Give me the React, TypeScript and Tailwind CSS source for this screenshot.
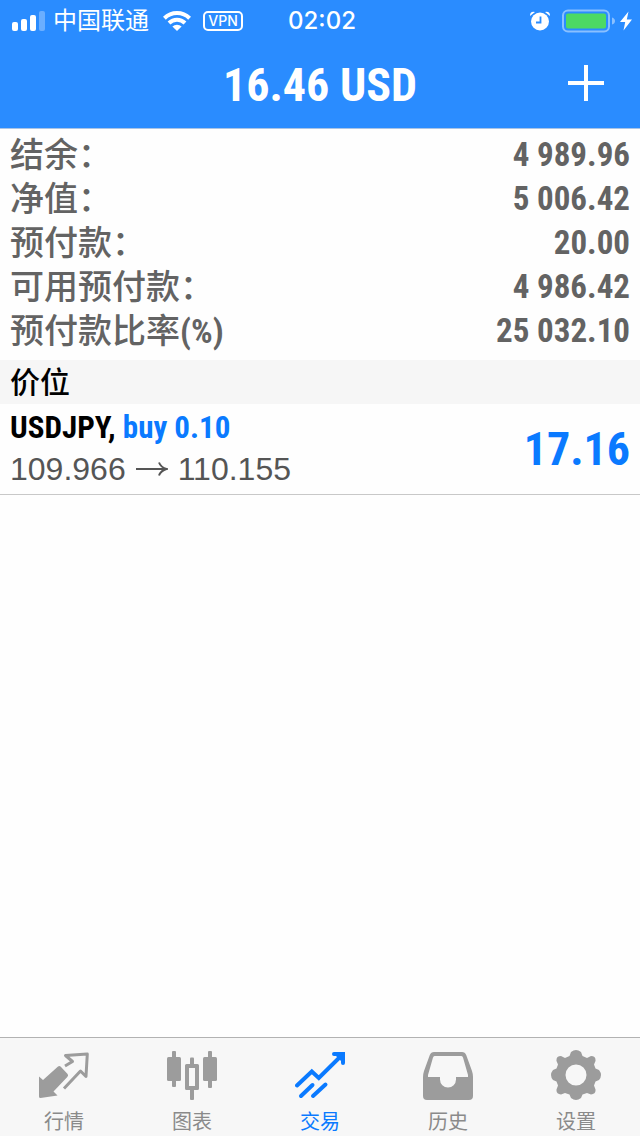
import type { ReactNode } from 'react'
import clsx from 'clsx'

const summary = [
  { label: '结余：', value: '4 989.96' },
  { label: '净值：', value: '5 006.42' },
  { label: '预付款：', value: '20.00' },
  { label: '可用预付款：', value: '4 986.42' },
  { label: '预付款比率', unit: '(%)', value: '25 032.10' },
]

const positions = [
  { symbol: 'USDJPY', side: 'buy 0.10', open: '109.966', current: '110.155', profit: '17.16' },
]

const tabs: { label: string; icon: ReactNode; active?: boolean }[] = [
  { label: '行情', icon: <QuotesIcon /> },
  { label: '图表', icon: <ChartIcon /> },
  { label: '交易', icon: <TradeIcon />, active: true },
  { label: '历史', icon: <HistoryIcon /> },
  { label: '设置', icon: <SettingsIcon /> },
]

const condensed = "font-['Roboto_Condensed','Liberation_Sans',sans-serif] font-bold"

function TabSvg({ children }: { children: ReactNode }) {
  return (
    <svg viewBox="0 0 50 50" className="size-[50px]" fill="currentColor" aria-hidden="true">
      {children}
    </svg>
  )
}

function QuotesIcon() {
  return (
    <TabSvg>
      <path d="M0 26.5 L4 30 L19 16.5 Q20.5 15.5 21.8 16.8 L28.6 24 Q29.8 25.5 28.3 27 L14.5 41.5 L18.5 45.5 L1.5 48 Q0 48 0 46.5 Z" />
      <path
        d="M26 16 L33.5 11.5 L26.5 5.5 L48.3 4 L47 26.5 L41.5 21 L25 38.5"
        fill="none"
        stroke="currentColor"
        strokeWidth="3"
        strokeLinejoin="round"
      />
    </TabSvg>
  )
}

function ChartIcon() {
  return (
    <TabSvg>
      <rect x="5" y="1" width="4" height="36" rx="1" />
      <rect x="0" y="7" width="14" height="24" rx="1.5" />
      <rect x="23" y="7.5" width="4" height="8" rx="1" />
      <rect x="23" y="38" width="4" height="12" rx="1" />
      <path
        d="M19.5 14 h11 a1.5 1.5 0 0 1 1.5 1.5 v23 a1.5 1.5 0 0 1 -1.5 1.5 h-11 a1.5 1.5 0 0 1 -1.5 -1.5 v-23 a1.5 1.5 0 0 1 1.5 -1.5 Z M22 18 v18 h6 v-18 Z"
        fillRule="evenodd"
      />
      <rect x="41" y="1" width="4" height="37" rx="1" />
      <rect x="36" y="7" width="14" height="24" rx="1.5" />
    </TabSvg>
  )
}

function TradeIcon() {
  return (
    <TabSvg>
      <g fill="none" stroke="currentColor" strokeWidth="4" strokeLinecap="round" strokeLinejoin="miter">
        <path d="M2 35.5 L16.8 21.5 L23.8 28 L47 5" />
        <path d="M39 4 H48 V13" />
        <path d="M6 46 L17.5 35 M18 46 L30.5 34.5" />
      </g>
      <path d="M39 4 H48 V13 Z" />
    </TabSvg>
  )
}

function HistoryIcon() {
  return (
    <TabSvg>
      <path
        d="M11 2 H39 Q42 2 43.2 5 L49 21 Q50 24 50 27 V46 Q50 50 46 50 H4 Q0 50 0 46 V27 Q0 24 1 21 L6.8 5 Q8 2 11 2 Z M11.5 6 Q10.5 6 10 7.5 L5 25 V27 H17 V29.5 A8 8 0 0 0 33 29.5 V27 H45 V25 L40 7.5 Q39.5 6 38.5 6 Z"
        fillRule="evenodd"
      />
    </TabSvg>
  )
}

function SettingsIcon() {
  return (
    <TabSvg>
      <path
        d="M20 2 Q25 -2 30 2 L31.5 6 L36 8 L40 6 Q45 6 44.5 11 L43 14.5 L44.5 18.5 L48 20 Q52 25 48 30 L44.5 31.5 L43 35.5 L44.5 39.5 Q45 44.5 40 44.5 L36 43 L31.5 44.5 L30 48 Q25 52 20 48 L18.5 44.5 L14 43 L10 44.5 Q5 44.5 5.5 39.5 L7 35.5 L5.5 31.5 L2 30 Q-2 25 2 20 L5.5 18.5 L7 14.5 L5.5 11 Q5 6 10 6 L14 8 L18.5 6 Z M25 14.5 A10.5 10.5 0 1 0 25 35.5 A10.5 10.5 0 1 0 25 14.5 Z"
        fillRule="evenodd"
      />
    </TabSvg>
  )
}

function StatusBar() {
  return (
    <div className="grid h-[42px] grid-cols-[1fr_auto_1fr] items-center pl-3 pr-2">
      <div className="flex items-center">
        <svg viewBox="0 0 33 20" className="h-5 w-[33px]" fill="currentColor" aria-hidden="true">
          <rect x="0" y="11" width="6" height="9" rx="2" />
          <rect x="9" y="8" width="6" height="12" rx="2" />
          <rect x="18" y="4" width="6" height="16" rx="2" />
          <rect x="27" y="0" width="6" height="20" rx="2" opacity="0.3" />
        </svg>
        <span className="ml-2 text-[24px] leading-10">中国联通</span>
        <svg viewBox="0 0 28 20" className="ml-3.5 h-5 w-7" aria-hidden="true">
          <g fill="none" stroke="currentColor" strokeWidth="4">
            <path d="M1.4 7.2 A18 18 0 0 1 26.6 7.2" />
            <path d="M6 12 A11.5 11.5 0 0 1 22 12" />
          </g>
          <path d="M14 20 L9.4 15.6 A6.6 6.6 0 0 1 18.6 15.6 Z" fill="currentColor" />
        </svg>
        <span className="ml-3 flex h-5 w-10 items-center justify-center rounded-[5px] border-2 border-white font-['Inter','Liberation_Sans',sans-serif] text-[14px] font-medium leading-4">
          VPN
        </span>
      </div>
      <time className="font-['Inter','Liberation_Sans',sans-serif] text-[24px] font-medium leading-10">02:02</time>
      <div className="flex items-center justify-end">
        <svg viewBox="0 0 20 20" className="size-5" aria-hidden="true">
          <circle cx="10" cy="10.5" r="9" fill="currentColor" />
          <path d="M0 5 Q0 0 5 1 Z M20 5 Q20 0 15 1 Z" fill="currentColor" />
          <path d="M10.5 5.5 V11.5 H6" fill="none" stroke="#2a8cff" strokeWidth="1.8" />
        </svg>
        <svg viewBox="0 0 54 24" className="ml-3 h-6 w-[54px]" aria-hidden="true">
          <rect x="1" y="1.5" width="46" height="21" rx="5" fill="none" stroke="white" strokeOpacity="0.45" strokeWidth="2" />
          <rect x="4" y="4.5" width="40" height="15" rx="2" fill="#4cd964" />
          <path d="M50 8.5 Q53 9.5 53 12 Q53 14.5 50 15.5 Z" fill="white" fillOpacity="0.45" />
        </svg>
        <svg viewBox="0 0 12 20" className="ml-1 h-5 w-3" fill="currentColor" aria-hidden="true">
          <path d="M8.5 0.5 L0 11 H5.2 L3.5 19.5 L12 8.5 H6.8 Z" />
        </svg>
      </div>
    </div>
  )
}

export default function App() {
  return (
    <div className="flex min-h-screen flex-col bg-[#fefefe] font-['Liberation_Sans','Noto_Sans_CJK_SC',sans-serif]">
      <header className="border-b border-[#a9c4e6] bg-[#2a8cff] text-white">
        <StatusBar />
        <div className="grid grid-cols-[1fr_auto_1fr] items-center px-9">
          <h1 className={clsx(condensed, 'col-start-2 text-[46px] leading-[86px]')}>16.46 USD</h1>
          <button type="button" aria-label="新订单" className="justify-self-end pb-1">
            <svg viewBox="0 0 36 36" className="size-9" stroke="currentColor" strokeWidth="4" aria-hidden="true">
              <path d="M18 0 V36 M0 18 H36" />
            </svg>
          </button>
        </div>
      </header>

      <main className="grow">
        <dl className="px-2.5 pb-[7px] pt-1 text-[#636363]">
          {summary.map((row) => (
            <div key={row.label} className="flex h-11 justify-between leading-[44px]">
              <dt className="text-[34px] font-medium">
                {row.label}
                {row.unit && <span className={condensed}>{row.unit}</span>}
              </dt>
              <dd className={clsx(condensed, 'text-[33px]')}>{row.value}</dd>
            </div>
          ))}
        </dl>

        <h2 className="h-11 bg-[#f6f6f6] px-2.5 text-[30px] font-medium leading-[46px] text-black">价位</h2>
        <ul>
          {positions.map((p) => (
            <li key={p.symbol} className="flex items-center justify-between border-b border-[#c8c8c8] px-2.5 pb-1 pt-1">
              <div>
                <p className={clsx(condensed, 'text-[31px] leading-10 text-black')}>
                  {p.symbol}, <span className="text-[#0a7aff]">{p.side}</span>
                </p>
                <p className="flex items-center gap-2.5 text-[32px] leading-[42px] text-[#555]">
                  {p.open}
                  <svg
                    viewBox="0 0 32 16"
                    className="h-4 w-8"
                    fill="none"
                    stroke="currentColor"
                    strokeWidth="2"
                    role="img"
                    aria-label="至"
                  >
                    <path d="M0 8 H30 M23 1.5 Q25 6.5 30.5 8 Q25 9.5 23 14.5" />
                  </svg>
                  {p.current}
                </p>
              </div>
              <p className={clsx(condensed, 'text-[46px] leading-[82px] text-[#0a7aff]')}>{p.profit}</p>
            </li>
          ))}
        </ul>
      </main>

      <nav className="sticky bottom-0 grid grid-cols-5 border-t border-[#b2b2b2] bg-[#f7f7f7]">
        {tabs.map((tab) => (
          <a
            key={tab.label}
            href="#"
            aria-current={tab.active ? 'page' : undefined}
            className={clsx('flex flex-col items-center pb-1 pt-3', tab.active ? 'text-[#0a7aff]' : 'text-[#9c9c9c]')}
          >
            {tab.icon}
            <span className={clsx('mt-3 text-[20px] leading-5', !tab.active && 'text-[#8a8a8a]')}>{tab.label}</span>
          </a>
        ))}
      </nav>
    </div>
  )
}
